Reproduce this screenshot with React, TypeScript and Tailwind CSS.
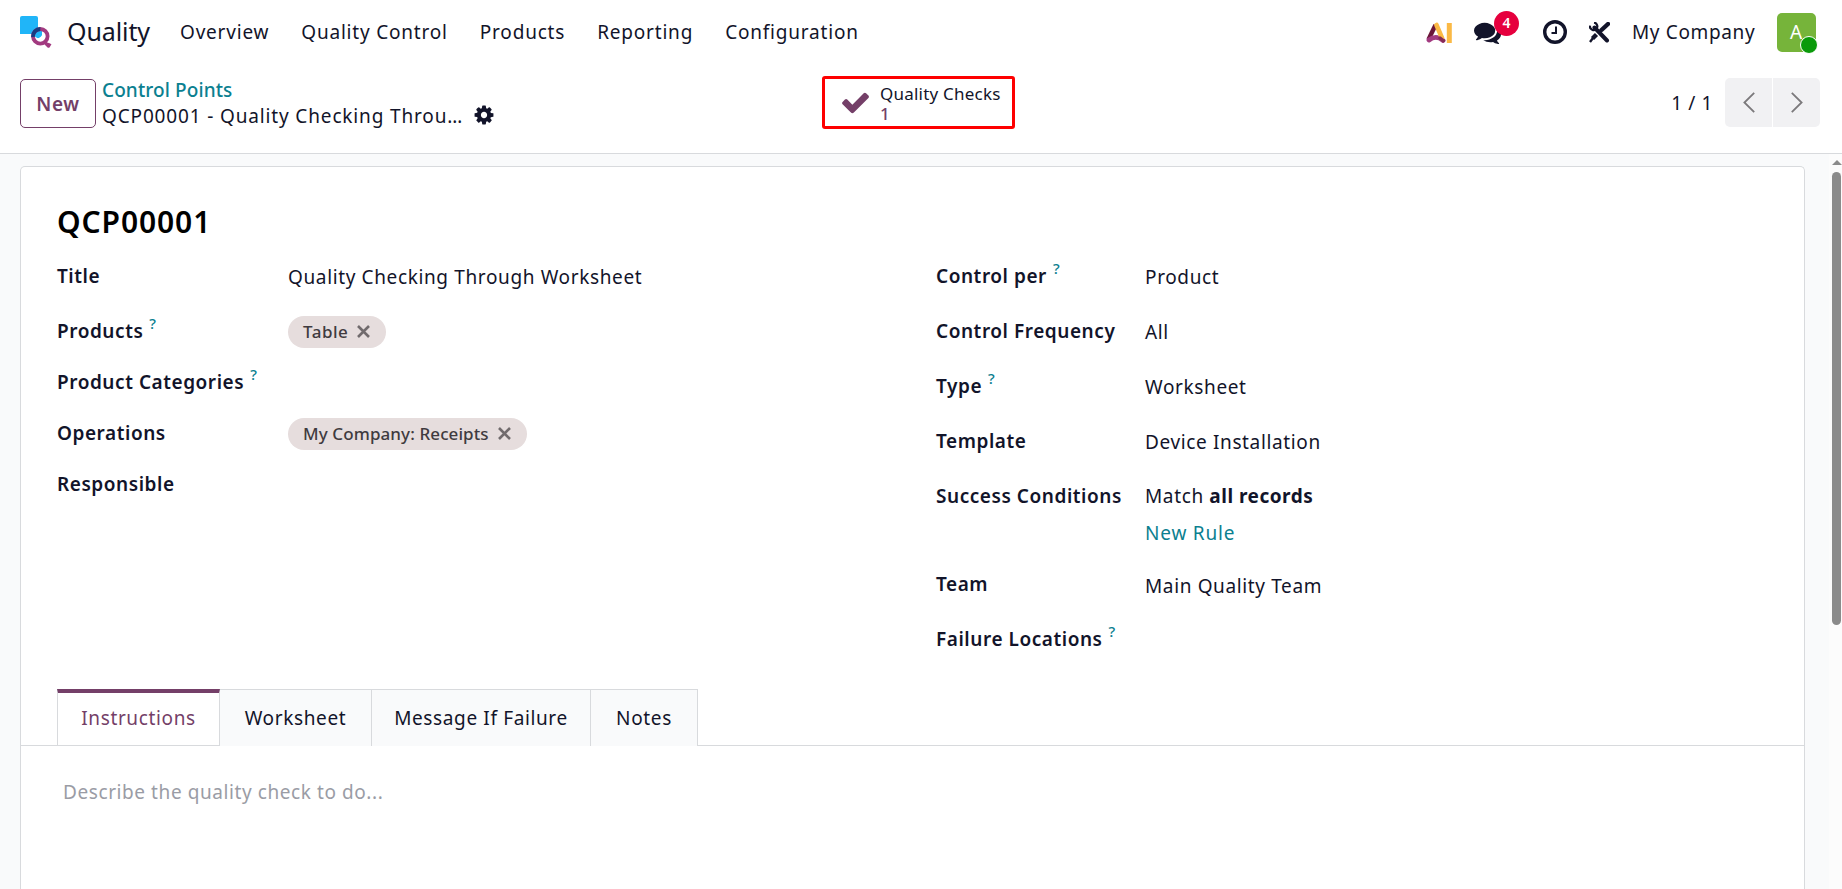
import type { ReactNode } from 'react'

const ICONS = {
  check: 'M1671 566q0 40-28 68l-724 724-136 136q-28 28-68 28t-68-28l-136-136-362-362q-28-28-28-68t28-68l136-136q28-28 68-28t68 28l294 295 656-657q28-28 68-28t68 28l136 136q28 28 28 68z',
  cog: 'M1152 896q0-106-75-181t-181-75-181 75-75 181 75 181 181 75 181-75 75-181zm512-109v222q0 12-8 23t-20 13l-185 28q-19 54-39 91 35 50 107 138 10 12 10 25t-9 23q-27 37-99 108t-94 71q-12 0-26-9l-138-108q-44 23-91 38-16 136-29 186-7 28-36 28h-222q-14 0-24.5-8.5t-11.5-21.5l-28-184q-49-16-90-37l-141 107q-10 9-25 9-14 0-25-11-126-114-165-168-7-10-7-23 0-12 8-23 15-21 51-66.5t54-70.5q-27-50-41-99l-183-27q-13-2-21-12.5t-8-23.5v-222q0-12 8-23t19-13l186-28q14-46 39-92-40-57-107-138-10-12-10-24 0-10 9-23 26-36 98.5-107.5t94.5-71.5q13 0 26 10l138 107q44-23 91-38 16-136 29-186 7-28 36-28h222q14 0 24.5 8.5t11.5 21.5l28 184q49 16 90 37l142-107q9-9 24-9 13 0 25 10 129 119 165 170 7 8 7 22 0 12-8 23-15 21-51 66.5t-54 70.5q26 50 41 98l183 28q13 2 21 12.5t8 23.5z',
  comments: 'M1408 768q0 139-94 257t-256.5 186.5-353.5 68.5q-86 0-176-16-124 88-278 128-36 9-86 16h-3q-11 0-20.5-8t-11.5-21q-1-3-1-6.5t.5-6.5 2-6l2.5-5 3.5-5.5 4-5 4.5-5 4-4.5q5-6 23-25t26-29.5 22.5-29 25-38.5 20.5-44q-124-72-195-177t-71-224q0-139 94-257t256.5-186.5 353.5-68.5 353.5 68.5 256.5 186.5 94 257zm384 256q0 120-71 224.5t-195 176.5q10 24 20.5 44t25 38.5 22.5 29 26 29.5 23 25q1 1 4 4.5t4.5 5 4 5 3.5 5.5l2.5 5 2 6 .5 6.5-1 6.5q-3 14-13 22t-22 7q-50-7-86-16-154-40-278-128-90 16-176 16-271 0-472-132 58 4 88 4 161 0 309-45t264-129q125-92 192-212t67-254q0-77-23-152 129 71 204 178t75 230z',
}

function Icon({ name, className }: { name: keyof typeof ICONS; className: string }) {
  return (
    <svg viewBox="0 0 1792 1792" fill="currentColor" className={className}>
      <path d={ICONS[name]} />
    </svg>
  )
}

function QualityLogo() {
  return (
    <svg viewBox="0 0 32 32" className="size-8">
      <path d="M2 0h14a2 2 0 0 1 2 2v16H0V2a2 2 0 0 1 2-2z" fill="#20b5f8" />
      <circle cx="20.3" cy="20.3" r="6" fill="#fff" />
      <path d="M14 14h8v8q-2 1-4 .5L14 20z" fill="#20b5f8" />
      <path d="M16 22.5A6 6 0 0 0 22.5 16l3 3-4 6.5z" fill="#fff" />
      <circle cx="20.3" cy="20.3" r="7.3" fill="none" stroke="#a23a80" strokeWidth="3.8" />
      <path d="M13 21a7.3 7.3 0 0 1 7.3-8" fill="none" stroke="#1b3a80" strokeWidth="3.8" />
      <path d="M25 26.5l3.5 3.5 1.5-2.5" fill="none" stroke="#a23a80" strokeWidth="3.4" strokeLinejoin="round" />
    </svg>
  )
}

function AiLogo() {
  return (
    <svg viewBox="0 0 26 21" className="h-[21px] w-[26px]" fill="none" strokeWidth="4.6">
      <path d="M2.5 17.5L9.5 3" stroke="#6a1638" strokeWidth="4.4" />
      <path d="M3 18Q10 12.5 17 18.5" stroke="#a23a80" strokeLinecap="round" strokeWidth="4.8" />
      <path d="M10.5 3L16 16" stroke="#fbb945" strokeLinecap="round" />
      <path d="M14 16l3.5 2.8" stroke="#852c55" strokeWidth="3.4" strokeLinecap="round" />
      <path d="M23.3 1v20" stroke="#fbb945" strokeWidth="5" />
    </svg>
  )
}

function Clock() {
  return (
    <svg viewBox="0 0 24 24" className="size-6" fill="none" stroke="currentColor">
      <circle cx="12" cy="12" r="10.3" strokeWidth="3.4" />
      <path d="M13 6.5v6.4H8.5" strokeWidth="2" />
    </svg>
  )
}

function Tools() {
  return (
    <svg viewBox="0 0 21 21" className="size-[21px]" fill="none" stroke="currentColor">
      <path d="M5.5 5.5L18 18.5" strokeWidth="4" strokeLinecap="round" />
      <path d="M1 3.6a3.7 3.7 0 1 0 4-2.9" strokeWidth="2.3" />
      <path d="M12.5 8L19 2" strokeWidth="4.4" strokeLinecap="round" />
      <path d="M7.5 12.5L3.5 16.5" strokeWidth="4.4" />
      <path d="M4 16L1 20" strokeWidth="2.4" />
    </svg>
  )
}

function Tag({ children }: { children: ReactNode }) {
  return (
    <span className="-mt-0.5 flex h-8 items-center gap-[9px] rounded-full bg-[#e6dddd] pl-[15px] pr-4 text-[17px] font-medium tracking-[0.1px] text-[#3f3b3f]">
      {children}
      <svg viewBox="0 0 13 13" className="-mt-0.5 size-[13px]" stroke="#716b6d" strokeWidth="2.6">
        <path d="M1 1l11 11M12 1L1 12" />
      </svg>
    </span>
  )
}

type Row = { label: string; help?: boolean; value?: ReactNode; height: string }

const left: Row[] = [
  { label: 'Title', value: 'Quality Checking Through Worksheet', height: 'h-[55px]' },
  { label: 'Products', help: true, value: <Tag><span className="tracking-[0.5px]">Table</span></Tag>, height: 'h-[51px]' },
  { label: 'Product Categories', help: true, height: 'h-[51px]' },
  { label: 'Operations', value: <Tag>My Company: Receipts</Tag>, height: 'h-[51px]' },
  { label: 'Responsible', height: 'h-[51px]' },
]

const right: Row[] = [
  { label: 'Control per', help: true, value: 'Product', height: 'h-[55px]' },
  { label: 'Control Frequency', value: 'All', height: 'h-[55px]' },
  { label: 'Type', help: true, value: 'Worksheet', height: 'h-[55px]' },
  { label: 'Template', value: 'Device Installation', height: 'h-[55px]' },
  {
    label: 'Success Conditions',
    value: (
      <div className="-mt-px">
        <div>Match <b className="tracking-[0.5px]">all records</b></div>
        <div className="mt-[9px] tracking-[0.8px] text-[#0b8090]">New Rule</div>
      </div>
    ),
    height: 'h-[88px]',
  },
  { label: 'Team', value: <div className="mt-px">Main Quality Team</div>, height: 'h-[55px]' },
  { label: 'Failure Locations', help: true, height: 'h-[55px]' },
]

function Group({ rows, labelWidth }: { rows: Row[]; labelWidth: string }) {
  return (
    <div>
      {rows.map(r => (
        <div key={r.label} className={`flex items-start ${r.height}`}>
          <div className={`shrink-0 font-semibold tracking-[0.55px] ${labelWidth}`}>
            {r.label}
            {r.help && <sup className="ml-[6px] -top-[9px] text-[15px] font-medium text-[#0b8090]">?</sup>}
          </div>
          <div className="mt-px">{r.value}</div>
        </div>
      ))}
    </div>
  )
}

const menu = ['Overview', 'Quality Control', 'Products', 'Reporting', 'Configuration']

const tabs = [
  { label: 'Worksheet', width: 'w-[152px]' },
  { label: 'Message If Failure', width: 'w-[219px]' },
  { label: 'Notes', width: 'w-[107px]' },
]

export default function App() {
  return (
    <div className="flex h-[889px] w-[1842px] flex-col overflow-hidden bg-white font-['Noto_Sans',sans-serif] text-[19px] leading-7 tracking-[0.63px] text-[#12142a]">
      <header className="flex h-16 shrink-0 items-center pl-5 pr-[26px]">
        <QualityLogo />
        <span className="-mt-0.5 ml-[15px] w-[83px] text-[25px] tracking-[-0.1px]">Quality</span>
        <nav className="ml-[30px] flex gap-8 tracking-[0.8px]">
          {menu.map(m => <span key={m}>{m}</span>)}
        </nav>
        <div className="ml-auto flex items-center">
          <AiLogo />
          <div className="relative ml-[22px]">
            <Icon name="comments" className="size-[27px]" />
            <span className="absolute -top-2 left-5 flex size-[25px] items-center justify-center rounded-full bg-[#e6003e] text-[14px] font-semibold tracking-normal text-white">4</span>
          </div>
          <div className="ml-[42px]"><Clock /></div>
          <div className="ml-[22px]"><Tools /></div>
          <span className="ml-[22px] w-[122px] whitespace-nowrap">My Company</span>
          <div className="relative ml-[23px] flex size-[39px] items-center justify-center rounded-[5px] bg-[#76b43a] text-white">
            A
            <span className="absolute -bottom-0.5 -right-0.5 size-[18px] rounded-full border border-white bg-[#0a9a0a]" />
          </div>
        </div>
      </header>

      <div className="flex h-[90px] shrink-0 items-start border-b border-[#d8dadd] pl-5 pr-[22px]">
        <div className="mt-[15px] flex w-[802px]">
          <button className="h-[49px] w-[76px] rounded-[5px] border border-[#743f68] font-semibold text-[#743f68]">New</button>
          <div className="-mt-0.5 ml-[6px] leading-[26px]">
            <div className="font-medium tracking-[0.1px] text-[#0b8090]">Control Points</div>
            <div className="flex items-center tracking-[0.85px]">
              QCP00001 - Quality Checking Throu…
              <Icon name="cog" className="ml-[10px] -mt-0.5 size-[22px]" />
            </div>
          </div>
        </div>
        <button className="mt-3 flex h-[53px] w-[193px] items-center rounded-[3px] border-[3px] border-[#fe0000] pl-[15px] text-left text-[17px] leading-5 tracking-[0.22px]">
          <Icon name="check" className="mr-[9px] size-[31px] text-[#743f68]" />
          <span className="mt-0.5">
            <span className="block">Quality Checks</span>
            <span className="block font-medium text-[#743f68]">1</span>
          </span>
        </button>
        <div className="ml-auto mt-[14px] flex items-center">
          <span className="mr-3">1 / 1</span>
          <div className="flex gap-px">
            <button className="flex h-[49px] w-[47px] items-center justify-center rounded-l-[5px] bg-[#f1f1f3]">
              <svg viewBox="0 0 12 21" className="h-[21px] w-3" fill="none" stroke="#7b797b" strokeWidth="1.8">
                <path d="M11.2 .8L1.4 10.5l9.8 9.7" />
              </svg>
            </button>
            <button className="flex h-[49px] w-[47px] items-center justify-center rounded-r-[5px] bg-[#f1f1f3]">
              <svg viewBox="0 0 12 21" className="h-[21px] w-3" fill="none" stroke="#7b797b" strokeWidth="1.8">
                <path d="M.8 .8l9.8 9.7L.8 20.2" />
              </svg>
            </button>
          </div>
        </div>
      </div>

      <main className="flex min-h-0 flex-1 bg-[#f9fafb]">
        <section className="ml-5 mt-3 flex w-[1785px] flex-col rounded-t-[5px] border border-b-0 border-[#d8dadd] bg-white">
          <h1 className="ml-9 mt-[35px] text-[30px] font-semibold leading-10 tracking-[0.9px] text-black">QCP00001</h1>
          <div className="ml-9 mt-5 grid h-[427px] shrink-0 grid-cols-[879px_1fr]">
            <Group rows={left} labelWidth="w-[231px]" />
            <Group rows={right} labelWidth="w-[209px]" />
          </div>
          <div className="flex h-[57px] shrink-0 border-b border-[#d8dadd] pl-9">
            <div className="flex h-14 w-[163px] items-center justify-center border-x border-t-4 border-x-[#d8dadd] border-t-[#743f68] pb-0.5 text-[#743f68]">
              Instructions
            </div>
            {tabs.map(t => (
              <div key={t.label} className={`flex h-[57px] items-center justify-center border-r border-t border-[#d8dadd] bg-[#f9fafb] ${t.width}`}>
                {t.label}
              </div>
            ))}
          </div>
          <p className="ml-[42px] mt-8 tracking-[0.58px] text-[#9a9ca5]">Describe the quality check to do...</p>
        </section>
        <div className="ml-auto flex w-[13px] flex-col items-center bg-[#fcfcfc] pl-[2px] pt-[6px]">
          <svg viewBox="0 0 10 5" className="h-[5px] w-[10px]" fill="#8b8b8b">
            <path d="M0 5l5-5 5 5z" />
          </svg>
          <div className="mt-[7px] h-[453px] w-[9px] rounded-full bg-[#8b8b8b]" />
        </div>
      </main>
    </div>
  )
}
